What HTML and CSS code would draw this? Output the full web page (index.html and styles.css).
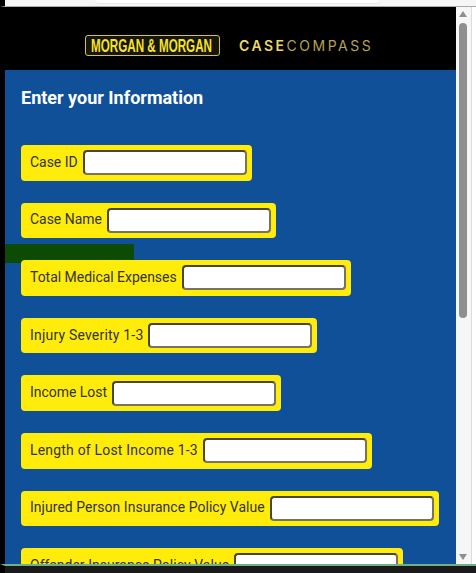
FILE: index.html
```html
<!DOCTYPE html>
<html lang="en">
<head>
    <meta charset="UTF-8">
    <meta name="viewport" content="width=device-width, initial-scale=1.0">
    <title>Case Compass</title>
    <link rel="stylesheet" href="styles.css">
</head>
<body>
    <div class="top-strip">
        <div class="address-pill"></div>
    </div>

    <div class="window">
        <div class="edge"></div>

        <div class="content">
            <header class="brand-bar">
                <div class="mm-logo"><span>MORGAN &amp; MORGAN</span></div>
                <span class="cc-logo"><b>CASE</b>COMPASS</span>
            </header>

            <main class="panel">
                <h1>Enter your Information</h1>
                <div class="smudge"></div>

                <div class="field"><label for="case-id">Case ID</label><input id="case-id" type="text"></div>
                <div class="field"><label for="case-name">Case Name</label><input id="case-name" type="text"></div>
                <div class="field"><label for="medical">Total Medical Expenses</label><input id="medical" type="text"></div>
                <div class="field"><label class="loose" for="severity">Injury Severity 1-3</label><input id="severity" type="text"></div>
                <div class="field"><label for="income">Income Lost</label><input id="income" type="text"></div>
                <div class="field"><label class="loose" for="length">Length of Lost Income 1-3</label><input id="length" type="text"></div>
                <div class="field"><label class="slight" for="injured">Injured Person Insurance Policy Value</label><input id="injured" type="text"></div>
                <div class="field"><label class="slight" for="offender">Offender Insurance Policy Value</label><input id="offender" type="text"></div>
            </main>
        </div>

        <div class="scrollbar">
            <div class="arrow-up"></div>
            <div class="thumb"></div>
            <div class="arrow-down"></div>
        </div>
        <div class="right-gutter"></div>
    </div>

    <div class="taskbar"></div>
</body>
</html>
```

FILE: styles.css
```css
* {
    box-sizing: border-box;
}

html, body {
    height: 100%;
}

body {
    display: flex;
    flex-direction: column;
    margin: 0;
    overflow: hidden;
    background-color: #fff;
    font-family: Roboto, "Noto Sans", sans-serif;
}

.top-strip {
    flex: 0 0 7px;
    background-color: #f6f6f6;
    border-left: 5px solid #000;
    border-bottom: 1px solid #a9a9a9;
    display: flex;
    justify-content: center;
}

.address-pill {
    width: 285px;
    height: 4px;
    margin-right: 6px;
    background-color: #fff;
    border-bottom: 1px solid #e8e8e8;
    border-radius: 0 0 8px 8px;
}

.window {
    flex: 1;
    display: flex;
    min-height: 0;
}

.edge {
    flex: 0 0 5px;
    background-color: #000;
}

.content {
    flex: 1;
    display: flex;
    flex-direction: column;
    min-width: 0;
    overflow: hidden;
}

.brand-bar {
    flex: 0 0 63px;
    display: flex;
    align-items: center;
    padding: 14px 0 0 80px;
    gap: 19px;
    background-color: #000;
}

.mm-logo {
    flex: 0 0 135px;
    min-width: 0;
    height: 21px;
    padding-left: 5px;
    line-height: 19px;
    border: 1px solid #d8c62a;
    border-radius: 3px;
    background-color: #17160a;
    color: #f6e22c;
    font-family: "Liberation Sans", sans-serif;
    font-size: 19px;
    font-weight: bold;
    white-space: nowrap;
}

.mm-logo span {
    display: inline-block;
    transform: scaleX(0.613);
    transform-origin: left center;
}

.cc-logo {
    color: #b5a253;
    font-family: "Inter", sans-serif;
    font-size: 14px;
    letter-spacing: 2.5px;
    white-space: nowrap;
}

.cc-logo b {
    color: #ecd96a;
    font-weight: 600;
}

.panel {
    position: relative;
    flex: 1;
    padding: 18px 16px 0;
    background-color: #105099;
}

.panel h1 {
    margin: 0 0 37px;
    color: #fff;
    font-size: 18px;
    font-weight: 700;
    line-height: 20px;
}

.smudge {
    position: absolute;
    left: 0;
    top: 174px;
    width: 129px;
    height: 19px;
    background-color: #0c4b05;
}

.field {
    display: flex;
    width: fit-content;
    align-items: center;
    height: 35.6px;
    margin-bottom: 22px;
    padding: 0 5px 0 9px;
    background-color: #ffec0a;
    border-radius: 4px;
    position: relative;
}

.field label {
    padding-bottom: 2px;
    color: #333;
    font-size: 13.95px;
    white-space: nowrap;
}

.field label.loose {
    letter-spacing: 0.22px;
}

.field label.slight {
    letter-spacing: 0.06px;
}

.field input {
    width: 164px;
    height: 25px;
    margin-left: 5px;
    border: 2px solid #4a4636;
    border-right-color: #77735c;
    border-bottom-color: #77735c;
    border-radius: 4px;
    background-color: #fff;
}

.scrollbar {
    position: relative;
    flex: 0 0 15px;
    background-color: #f6f6f6;
}

.thumb {
    position: absolute;
    left: 3px;
    top: 16px;
    width: 8px;
    height: 295px;
    background-color: #8f8f8f;
    border-radius: 4px;
}

.arrow-up, .arrow-down {
    position: absolute;
    left: 3px;
    width: 0;
    height: 0;
    border-left: 4px solid transparent;
    border-right: 4px solid transparent;
}

.arrow-up {
    top: 4px;
    border-bottom: 6px solid #8f8f8f;
}

.arrow-down {
    bottom: 4px;
    border-top: 6px solid #8f8f8f;
}

.right-gutter {
    flex: 0 0 5px;
    background-color: #fff;
    border-left: 1px solid #dcdcdc;
}

.taskbar {
    flex: 0 0 9px;
    background-color: #1a1a1a;
    border-left: 5px solid #000;
    border-top: 2px solid #6fae86;
}
```
